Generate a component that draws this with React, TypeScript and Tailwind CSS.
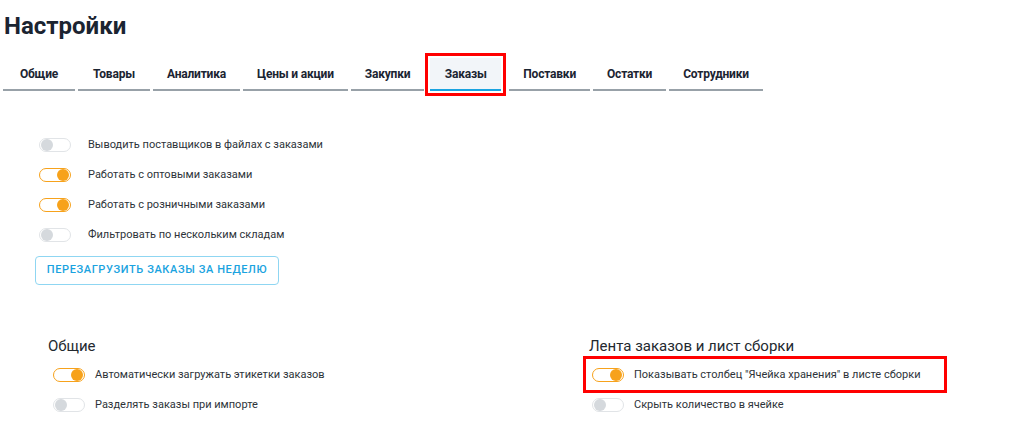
import React from "react";

function Toggle({ on }: { on: boolean }) {
  return (
    <div
      className={
        on
          ? "flex h-[14px] w-[32px] shrink-0 items-center justify-end rounded-full border border-[#f7a21b] bg-white px-[1px]"
          : "flex h-[14px] w-[32px] shrink-0 items-center justify-start rounded-full border border-[#e1e4e7] bg-white px-[1px]"
      }
    >
      <div
        className={
          on
            ? "h-[12px] w-[12px] rounded-full bg-[#f7a21b]"
            : "h-[12px] w-[12px] rounded-full bg-[#d5d9dd]"
        }
      />
    </div>
  );
}

const tabs = [
  "Общие",
  "Товары",
  "Аналитика",
  "Цены и акции",
  "Закупки",
  "Заказы",
  "Поставки",
  "Остатки",
  "Сотрудники",
];

export default function App() {
  return (
    <div className="h-[426px] w-[1036px] overflow-hidden bg-white font-['Roboto','Liberation_Sans',sans-serif] text-[#2d3339]">
      <h1 className="pl-[4px] pt-[10px] text-[24px] font-bold leading-[32px] text-[#1b2431]">
        Настройки
      </h1>

      <div className="mt-[16px] flex pl-[3px]">
        {tabs.map((t, i) => {
          const active = t === "Заказы";
          return (
            <div
              key={t}
              className={
                active
                  ? "ml-[6px] mr-[5px] flex h-[33px] min-w-[71px] items-center justify-center border-b-2 border-[#1aa3e0] bg-[#f2f5f9] px-[14px] text-[12px] font-bold tracking-[-0.2px] text-[#1b2431] outline-[3px] outline-offset-[2px] outline-[#f00] outline-solid"
                  : i === 0
                  ? "flex h-[33px] min-w-[72px] items-center justify-center border-b-2 border-[#98a1a8] px-[14px] text-[12px] font-bold tracking-[-0.2px] text-[#1b2431]"
                  : "ml-[3px] flex h-[33px] min-w-[72px] items-center justify-center border-b-2 border-[#98a1a8] px-[14px] text-[12px] font-bold tracking-[-0.2px] text-[#1b2431]"
              }
            >
              {t}
            </div>
          );
        })}
      </div>

      <div className="mt-[39px] flex flex-col pl-[39px]">
        {[
          ["Выводить поставщиков в файлах с заказами", false],
          ["Работать с оптовыми заказами", true],
          ["Работать с розничными заказами", true],
          ["Фильтровать по нескольким складам", false],
        ].map(([label, on]) => (
          <div key={label as string} className="flex h-[30px] items-center gap-[17px]">
            <Toggle on={on as boolean} />
            <span className="text-[11px]">{label as string}</span>
          </div>
        ))}
      </div>

      <div className="mt-[6px] pl-[35px]">
        <button className="flex h-[29px] w-[244px] items-center justify-center rounded-[4px] border border-[#8fd6f2] text-[11px] font-medium tracking-[0.6px] text-[#1aa3e0]">
          ПЕРЕЗАГРУЗИТЬ ЗАКАЗЫ ЗА НЕДЕЛЮ
        </button>
      </div>

      <div className="mt-[49px] flex pl-[48px]">
        <div className="w-[541px]">
          <div className="h-[22px] text-[15px] leading-[24px] text-[#23292f]">Общие</div>
          <div className="mt-[4px] flex flex-col pl-[5px]">
            <div className="flex h-[30px] items-center gap-[10px]">
              <Toggle on />
              <span className="text-[11px]">Автоматически загружать этикетки заказов</span>
            </div>
            <div className="flex h-[30px] items-center gap-[10px]">
              <Toggle on={false} />
              <span className="text-[11px]">Разделять заказы при импорте</span>
            </div>
          </div>
        </div>
        <div>
          <div className="h-[22px] text-[15px] leading-[24px] text-[#23292f]">
            Лента заказов и лист сборки
          </div>
          <div className="mt-[4px] flex flex-col pl-[3px]">
            <div className="relative flex h-[30px] items-center gap-[10px]">
              <span className="pointer-events-none absolute left-[-9px] top-[-4px] h-[37px] w-[364px] border-[3px] border-[#f00]" />
              <Toggle on />
              <span className="whitespace-nowrap text-[11px]">
                Показывать столбец "Ячейка хранения" в листе сборки
              </span>
            </div>
            <div className="flex h-[30px] items-center gap-[10px]">
              <Toggle on={false} />
              <span className="text-[11px]">Скрыть количество в ячейке</span>
            </div>
          </div>
        </div>
      </div>
    </div>
  );
}
